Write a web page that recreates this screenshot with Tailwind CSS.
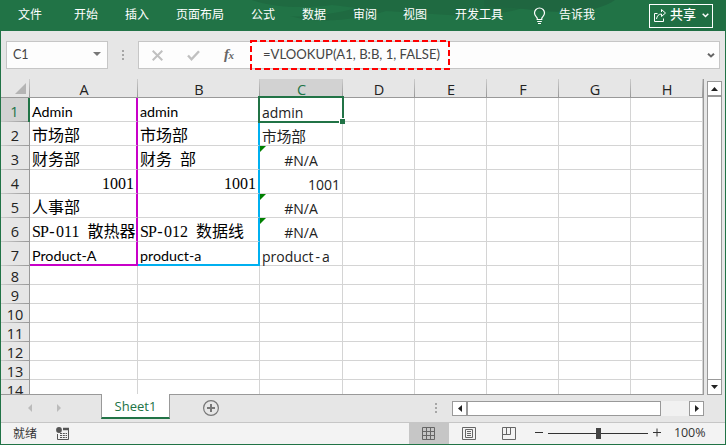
<!DOCTYPE html>
<html lang="zh-CN">
<head>
  <meta charset="UTF-8">
  <meta name="viewport" content="width=device-width, initial-scale=1.0">
  <title>Excel - VLOOKUP</title>
  <script src="https://cdn.jsdelivr.net/npm/@tailwindcss/browser@4"></script>
</head>
<body class="w-[726px] h-[445px] overflow-hidden bg-[#e6e6e6] font-['Open_Sans','Noto_Sans_CJK_SC',sans-serif] text-[#222]">
  <div class="flex flex-col w-full h-full">

    <!-- Ribbon tabs -->
    <header class="relative h-[31px] shrink-0 bg-[#217346] text-white">
      <svg class="absolute inset-0" width="726" height="31">
        <path d="M252 0c20 7 50 9 80 5l25 3c-24 6-48 10-67 8 30 9 70 3 96-5l62 4c40 3 76-4 91-15z" fill="#1f6a41"/>
        <path d="M484 0h131c-9 7-28 12-51 12-30 0-51-6-80-5z" fill="#1f6640"/>
        <path d="M650 31c14-15 31-25 48-31h28v31z" fill="#1f6e43"/>
      </svg>
      <div class="relative flex h-[30px] items-center text-[12px] leading-none whitespace-nowrap">
        <span class="ml-[18px] w-[56px]">文件</span>
        <span class="w-[51px]">开始</span>
        <span class="w-[51px]">插入</span>
        <span class="w-[75px]">页面布局</span>
        <span class="w-[51px]">公式</span>
        <span class="w-[51px]">数据</span>
        <span class="w-[50px]">审阅</span>
        <span class="w-[52px]">视图</span>
        <span class="w-[78px]">开发工具</span>
        <svg class="mt-[2px]" width="13" height="18" viewBox="0 0 13 18" fill="none" stroke="#fff" stroke-width="1.2">
          <path d="M4.2 12.5V11C3 9.500 1.500 8.400 1.500 6a5 5 0 0 1 10 0c0 2.400-1.500 3.500-2.700 5v1.500zM4.200 14.500h4.600M5 16.500h3"/>
        </svg>
        <span class="ml-[13px] w-[90px]">告诉我</span>
        <div class="flex items-center w-[64px] h-[24px] mt-[1px] border border-white pl-[4px]">
          <svg width="12" height="13" viewBox="0 0 12 13" fill="none" stroke="#fff">
            <path d="M3.500 4.500h-3v8h9v-3M2.500 10c.500-3 2-5 5-5V7.500l4-3.500-4-3.500V3"/>
          </svg>
          <span class="ml-[4px] -mt-[3px] text-[13px] font-medium">共享</span>
          <svg class="ml-[6px]" width="7" height="5" fill="none" stroke="#fff" stroke-width="1.500"><path d="M.7.7l2.800 2.800L6.300.7"/></svg>
        </div>
      </div>
    </header>

    <div class="flex flex-col flex-1 min-h-0 border-x border-b border-[#217346]">
      <!-- Name box and formula bar -->
      <div class="flex h-[48px] shrink-0 pt-[10px] pl-[5px]">
        <div class="flex items-center justify-between w-[102px] h-[28px] border border-[#c6c6c6] bg-[#fdfdfd] pl-[6px] pr-[6px] text-[12.500px] text-[#444]">
          <span class="font-[Lato]">C1</span>
          <svg class="-mt-[2px]" width="8" height="4"><path d="M0 0h8L4 4z" fill="#777"/></svg>
        </div>
        <svg class="ml-[14px] mt-[9px]" width="3" height="11" fill="#a6a6a6"><path d="M0 0h2v2H0zM0 4h2v2H0zM0 8h2v2H0z"/></svg>
        <div class="relative flex items-center w-[582px] h-[28px] ml-[13px] border border-[#c6c6c6] bg-[#fdfdfd] text-[#444]">
          <svg class="ml-[13px]" width="11" height="11" fill="none" stroke="#c0c0c0" stroke-width="2"><path d="M.7.7l9.600 9.600M10.300.7L.7 10.300"/></svg>
          <svg class="ml-[24px]" width="13" height="11" fill="none" stroke="#c0c0c0" stroke-width="2.400"><path d="M1 5.500l3.500 3.700L12 1.200"/></svg>
          <span class="ml-[24px] w-[31px] -mt-[2px] font-['Liberation_Serif',serif] italic font-bold text-[15px] leading-none text-[#666] tracking-[-0.500px]">f<span class="text-[11px]">x</span></span>
          <span class="ml-[8px] -mt-[1px] font-[Lato] text-[13.100px] whitespace-nowrap">=VLOOKUP(A1, B:B, 1, FALSE)</span>
          <svg class="absolute right-[4px] top-[11px]" width="8" height="5" fill="none" stroke="#666" stroke-width="2"><path d="M1 .7l3 2.800L7 .7"/></svg>
          <svg class="absolute left-[111px] -top-[2px]" width="200" height="31" fill="none" stroke="#f00" stroke-width="2" stroke-dasharray="6 3"><rect x="1" y="1" width="198" height="28"/></svg>
        </div>
      </div>

      <!-- Worksheet -->
      <div class="flex h-[316px] shrink-0">
        <div class="relative w-[703px] h-full overflow-hidden border-b border-r border-[#999]">
          <div id="sheet"></div>
          <div class="absolute left-[257px] top-[17px] w-[86px] h-[27px] border-2 border-[#217346]"></div>
          <div class="absolute left-[338px] top-[39px] w-[6px] h-[6px] border-t border-l border-white bg-[#217346]"></div>
        </div>
        <div class="flex flex-col w-[15px] ml-[3px] mt-[2px] h-[314px]">
          <div class="flex items-center justify-center h-[15px] border border-[#999] bg-white"><svg width="7" height="4"><path d="M0 4h7L3.500 0z" fill="#222"/></svg></div>
          <div class="flex-1 border border-[#999] bg-white"></div>
          <div class="flex items-center justify-center h-[15px] border border-t-0 border-[#999] bg-white"><svg width="7" height="4"><path d="M0 0h7L3.500 4z" fill="#222"/></svg></div>
        </div>
      </div>

      <!-- Sheet tabs and horizontal scrollbar -->
      <div class="flex h-[28px] shrink-0 -mt-px relative z-10">
        <svg class="ml-[27px] mt-[10px]" width="34" height="8" fill="#bbb"><path d="M4 0v8L0 4zM29 0v8l4-4z"/></svg>
        <div class="w-[69px] h-[25px] ml-[39px] border-x border-b-2 border-x-[#999] border-b-[#217346] bg-white text-center text-[13px] leading-[24px] text-[#217346]">Sheet1</div>
        <svg class="ml-[33px] mt-[6px]" width="16" height="16" fill="none" stroke="#777"><circle cx="8" cy="8" r="7.400" stroke-width="1.200"/><path d="M8 4v8M4 8h8" stroke-width="2"/></svg>
        <svg class="ml-[216px] mt-[9px]" width="2" height="11" fill="#a6a6a6"><path d="M0 0h2v2H0zM0 4h2v2H0zM0 8h2v2H0z"/></svg>
        <div class="flex w-[252px] h-[15px] ml-[15px] mt-[7px] bg-[#f1f1f1]">
          <div class="flex items-center justify-center w-[15px] border border-[#999] bg-white"><svg width="4" height="7"><path d="M4 0v7L0 3.500z" fill="#222"/></svg></div>
          <div class="w-[194px] border border-[#999] bg-white"></div>
          <div class="flex items-center justify-center w-[15px] ml-auto border border-[#999] bg-white"><svg width="4" height="7"><path d="M0 0v7l4-3.500z" fill="#222"/></svg></div>
        </div>
      </div>

      <!-- Status bar -->
      <div class="flex flex-1 items-center border-t border-[#c6c6c6] bg-[#f3f3f3] text-[12px] leading-none text-[#333]">
        <span class="ml-[12px] w-[43px]">就绪</span>
        <svg class="-mt-[1px]" width="13" height="13" fill="none" stroke="#555"><circle cx="3" cy="3" r="2.900" fill="#555" stroke="none"/><path d="M1.500 7v5.500h11V3"/><path d="M7 2h6" stroke-width="2.500"/><path d="M4 6.500h7M4 8.500h7M4 10.500h7" stroke-dasharray="2 .8"/></svg>
        <div class="flex items-center justify-center w-[40px] h-full ml-[340px] bg-[#c6c6c6]">
          <svg class="-mt-[1px] -ml-[1px]" width="13" height="13" fill="none" stroke="#666"><path d="M.5.5h12v12H.500zM4.500 0v13M8.500 0v13M0 4.500h13M0 8.500h13"/></svg>
        </div>
        <svg class="ml-[13px] -mt-[1px]" width="14" height="13" fill="none" stroke="#666"><path d="M.5.5h13v12H.500zM3.500 2.500h7v8h-7zM5 4.500h4M5 6.500h4M5 8.500h4"/></svg>
        <svg class="ml-[26px] -mt-[1px]" width="14" height="13" fill="none" stroke="#666"><path d="M.5.5h13v12H.500zM.5 7.500h8v-7M4.500.5v7"/></svg>
        <svg class="ml-[19px]" width="126" height="11" fill="none" stroke="#333"><path d="M0 4.500h8M13 5.500h100M118 4.500h8M122 .5v8"/><path d="M61 0h5v11h-5z" fill="#444" stroke="none"/></svg>
        <span class="ml-[13px] text-[12.500px] tracking-[-0.100px]">100%</span>
      </div>
    </div>
  </div>

  <script>
    const cols = ['A', 'B', 'C', 'D', 'E', 'F', 'G', 'H'];
    const rows = [
      ['Admin', 'admin', 'admin'],
      ['市场部', '市场部', '市场部'],
      ['财务部', '财务 部', '#N/A'],
      ['1001', '1001', '1001'],
      ['人事部', '', '#N/A'],
      ['SP-011 散热器', 'SP-012 数据线', '#N/A'],
      ['Product-A', 'product-a', 'product-a'],
      [], [], [], [], [], [], []
    ];
    const grid = 'grid grid-rows-1 grid-cols-[29px_108px_122px_83px_72px_72px_72px_72px_72px] ';

    // Half-width Latin in the Songti cells: every character takes 8px
    const songti = text => text.replace(/[\x20-\x7e]+/g, s =>
      `<span class="font-['Liberation_Serif',serif] whitespace-pre [word-spacing:4px]">${s
        .replace('SP-', '<b class="font-normal tracking-[-0.900px]">SP</b><b class="font-normal px-[1.335px]">-</b>')}</span>`);

    // Column letters
    let html = `<div class="${grid} h-[19px] text-[14.500px] leading-[21px] text-center">
      <div class="relative border-b border-[#999]"><svg class="absolute right-[4px] bottom-[3px]" width="11" height="11"><path d="M11 0v11H0z" fill="#b4b4b4"/></svg><i class="absolute right-0 top-0 w-px h-full bg-linear-to-b from-[#ccc] to-[#999]"></i></div>`;
    cols.forEach(c => {
      const active = c === 'C' ? 'bg-[#d2d2d2] text-[#217346]' : '';
      html += `<div class="relative border-b border-[#999] ${active}">${c}<i class="absolute right-0 top-0 w-px h-full bg-linear-to-b from-[#ccc] to-[#999]"></i></div>`;
    });
    html += '</div>';

    rows.forEach((row, r) => {
      html += `<div class="${grid} ${r < 7 ? 'h-[24px]' : 'h-[19px]'}">`;
      const head = r === 0 ? 'bg-[#d2d2d2] text-[#217346] border-r-2 border-[#217346]' : 'border-r border-[#999]';
      html += `<div class="relative min-h-0 flex items-end justify-center text-[14.500px] leading-[17px] ${r < 7 ? 'pb-[2px]' : ''} ${head}">${r + 1}<i class="absolute left-0 bottom-0 w-full h-px bg-linear-to-r from-[#ccc] to-[#999]"></i></div>`;
      cols.forEach((c, i) => {
        const text = row[i] || '';
        let cell = 'border-r border-b border-[#d4d4d4]';
        if (c === 'A' && r < 7) cell = r === 6 ? 'border-r-2 border-b-2 border-[#c800c8]' : 'border-r-2 border-b border-r-[#c800c8] border-b-[#d4d4d4]';
        if (c === 'B' && r < 7) cell = r === 6 ? 'border-r-2 border-b-2 border-[#00b0f0]' : 'border-r-2 border-b border-r-[#00b0f0] border-b-[#d4d4d4]';
        let align = 'justify-start';
        if (text === '1001') align = 'justify-end';
        if (text === '#N/A') align = 'justify-center';
        let font = 'font-[Lato] text-[14.300px] pt-[5px]';
        let body = text;
        if (c === 'C') {
          font = r === 1 ? 'text-[14.670px] pt-[6px]' : 'text-[14px] pt-[6px]';
          body = text.replace('-', '<b class="font-normal px-[2px]">-</b>');
        } else if (r > 0 && r < 6) {
          font = 'text-[16px] pt-[5px]';
          body = songti(text);
        }
        const color = c === 'C' ? 'text-[#222]' : 'text-black';
        const error = text === '#N/A' ? '<svg class="absolute left-0 top-0" width="6" height="6"><path d="M0 0h6L0 6z" fill="#008000"/></svg>' : '';
        html += `<div class="relative min-w-0 min-h-0 bg-white ${color} leading-[17px] whitespace-nowrap pl-[2px] pr-[2px] flex ${align} ${cell} ${font}">${error}<span class="h-[17px]">${body}</span></div>`;
      });
      html += '</div>';
    });
    document.getElementById('sheet').innerHTML = html;
  </script>
</body>
</html>
